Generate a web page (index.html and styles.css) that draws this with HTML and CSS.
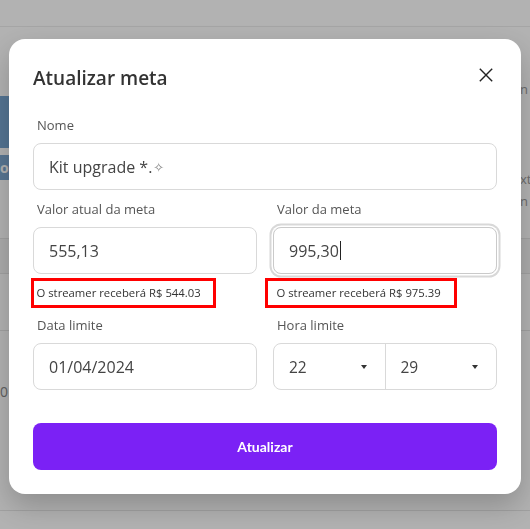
FILE: index.html
```html
<!DOCTYPE html>
<html lang="pt-BR">
<head>
<meta charset="utf-8">
<title>Atualizar meta</title>
<link rel="stylesheet" href="styles.css">
</head>
<body>
<div class="page">
  <header class="topbar"></header>
  <div class="upper">
    <div class="upper-main">
      <div class="banner"></div>
      <div class="pill">o</div>
    </div>
    <aside class="side">
      <p class="side-title">n</p>
      <p class="side-text">xt<br>n</p>
    </aside>
  </div>
  <div class="table">
    <div class="thead"></div>
    <div class="trow"></div>
    <div class="trow tall"><span class="cell">0</span></div>
  </div>
</div>

<div class="overlay">
  <div class="modal" role="dialog" aria-labelledby="modal-title">
    <div class="modal-head">
      <h2 class="modal-title" id="modal-title">Atualizar meta</h2>
      <button class="close" type="button" aria-label="Fechar">
        <svg width="14" height="14" viewBox="0 0 14 14"><path d="M0.8 0.8L13.2 13.2M13.2 0.8L0.8 13.2" stroke="#222" stroke-width="1.4" fill="none"/></svg>
      </button>
    </div>
    <div class="form">
      <div class="field">
        <span class="label">Nome</span>
        <div class="input">Kit upgrade *.<span class="star">✧</span></div>
      </div>
      <div class="row row-values">
        <div class="field">
          <span class="label">Valor atual da meta</span>
          <div class="input">555,13</div>
          <div class="helper helper-left">O streamer receberá R$ 544.03</div>
        </div>
        <div class="field">
          <span class="label">Valor da meta</span>
          <div class="input focused">995,30<span class="caret"></span></div>
          <div class="helper helper-right">O streamer receberá R$ 975.39</div>
        </div>
      </div>
      <div class="row row-dates">
        <div class="field">
          <span class="label">Data limite</span>
          <div class="input">01/04/2024</div>
        </div>
        <div class="field">
          <span class="label">Hora limite</span>
          <div class="time-group">
            <div class="time-part"><span>22</span><span class="arrow"></span></div>
            <div class="time-part"><span>29</span><span class="arrow"></span></div>
          </div>
        </div>
      </div>
      <button class="btn" type="button">Atualizar</button>
    </div>
  </div>
</div>
</body>
</html>
```
FILE: styles.css
```css
* { box-sizing: border-box; }

body {
  margin: 0;
  font-family: "Open Sans", "DejaVu Sans", sans-serif;
  background: #fff;
  overflow: hidden;
}

/* background page */
.page { height: 529px; }
.topbar { height: 27px; border-bottom: 1px solid #ececec; }
.upper { display: flex; height: 211px; }
.upper-main { width: 520px; flex-shrink: 0; }
.banner { margin-top: 69px; height: 52px; width: 220px; background: #78a6d2; }
.pill {
  margin-top: 7px;
  height: 25px;
  width: 120px;
  background: #7fa9d2;
  color: #fff;
  font-weight: 700;
  font-size: 14px;
  line-height: 25px;
}
.side { flex: 1; color: #9a9a9a; font-size: 13px; white-space: nowrap; }
.side-title { margin: 53px 0 0; line-height: 18px; }
.side-text { margin: 70px 0 0; line-height: 22px; }

.table { border-top: 1px solid #e6e6e6; }
.thead { height: 35px; background: #f6f6f6; border-bottom: 1px solid #e6e6e6; }
.trow { height: 57px; border-bottom: 1px solid #e6e6e6; }
.trow.tall { height: 180px; padding-top: 52px; }
.cell { display: block; line-height: 18px; font-size: 14px; color: #8a8a8a; }

/* overlay + modal */
.overlay {
  position: fixed;
  inset: 0;
  background: rgba(0, 0, 0, 0.3);
  display: flex;
  justify-content: center;
  align-items: flex-start;
  padding-top: 39px;
}
.modal {
  width: 512px;
  background: #fff;
  border-radius: 16px;
  padding: 25px 24px 24px;
  box-shadow: 0 12px 30px rgba(0, 0, 0, 0.22);
}
.modal-head { display: flex; justify-content: space-between; align-items: flex-start; }
.modal-title {
  margin: 0;
  font-size: 19px;
  font-weight: 600;
  line-height: 28px;
  color: #333;
}
.close {
  border: 0;
  background: none;
  padding: 0;
  width: 14px;
  height: 14px;
  margin: 4px 4px 0 0;
  display: block;
  cursor: pointer;
}
.close svg { display: block; }

.form { margin-top: 24px; display: flex; flex-direction: column; }
.field { display: flex; flex-direction: column; min-width: 0; }
.label {
  font-size: 13px;
  line-height: 18px;
  color: #555;
  padding-left: 4px;
  margin-bottom: 9px;
}
.input {
  height: 47px;
  border: 1px solid #d9d9d9;
  border-radius: 8px;
  padding: 0 15px;
  display: flex;
  align-items: center;
  font-size: 16px;
  color: #444;
  white-space: nowrap;
}
.star { color: #888; font-size: 13px; margin-left: 1px; }
.input.focused {
  border-color: #cacaca;
  box-shadow: 0 0 0 1.5px #fff, 0 0 0 3.5px #d8d8d8;
}
.caret { display: inline-block; width: 1px; height: 19px; background: #222; margin-left: 1px; }

.row { display: grid; grid-template-columns: 1fr 1fr; gap: 16px; }
.row-values { margin-top: 10px; }
.row-dates { margin-top: 8px; }

.helper {
  align-self: flex-start;
  margin-top: 4px;
  height: 30px;
  border: 3px solid #ff0000;
  font-size: 11.3px;
  line-height: 24px;
  color: #333;
  white-space: nowrap;
}
.helper-left { margin-left: -2px; padding: 0 12.5px 0 2.5px; }
.helper-right { margin-left: -8px; padding: 0 13.5px 0 8.5px; }

.time-group {
  display: flex;
  height: 47px;
  border: 1px solid #d9d9d9;
  border-radius: 8px;
  font-size: 15.5px;
  color: #444;
}
.time-part {
  flex: 1;
  display: flex;
  align-items: center;
  justify-content: space-between;
  padding: 0 18px 0 15px;
}
.time-part + .time-part { border-left: 1px solid #d9d9d9; }
.arrow {
  width: 0;
  height: 0;
  border-left: 3px solid transparent;
  border-right: 3px solid transparent;
  border-top: 4px solid #333;
}

.btn {
  margin-top: 33px;
  height: 47px;
  width: 100%;
  border: 0;
  border-radius: 8px;
  background: #7b21f5;
  color: #fff;
  font-family: Lato, "Open Sans", sans-serif;
  font-weight: 700;
  font-size: 14px;
  cursor: pointer;
}
```
